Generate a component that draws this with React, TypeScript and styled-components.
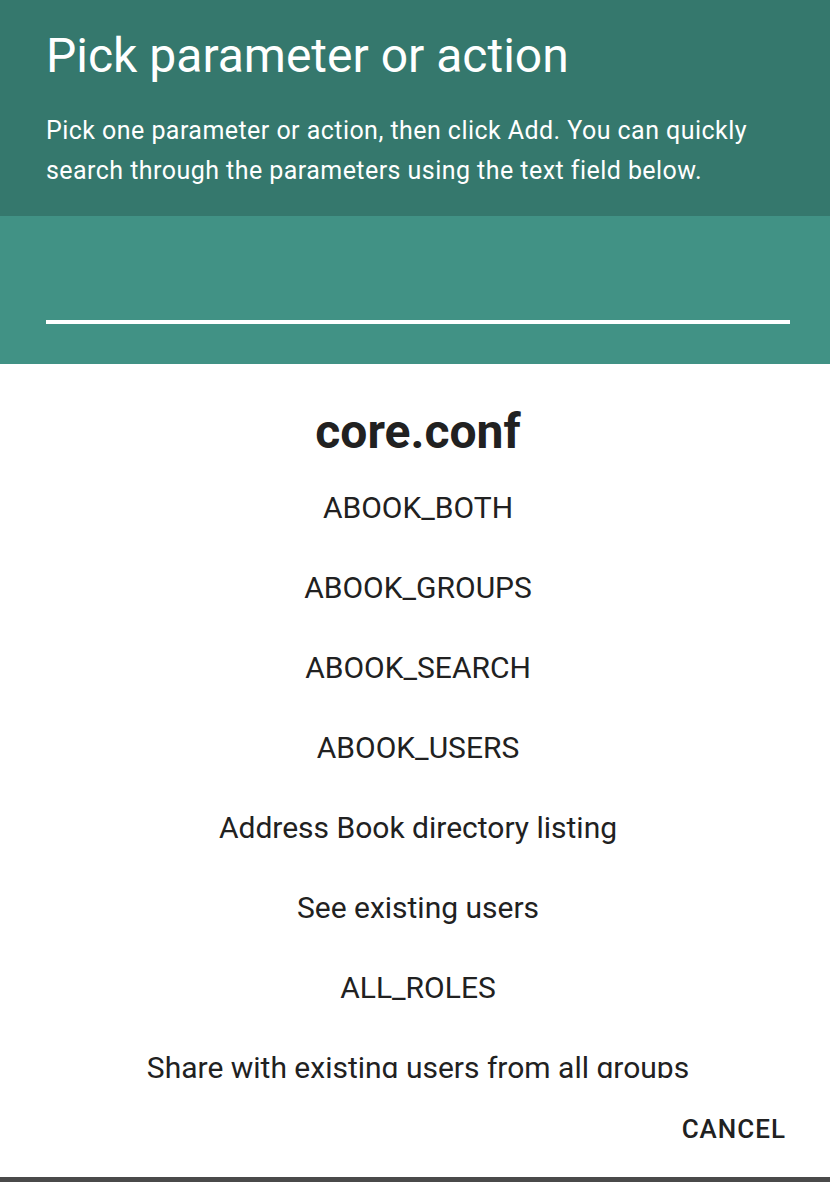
import React from "react";
import styled, { createGlobalStyle } from "styled-components";

const Global = createGlobalStyle`
  html, body { margin: 0; padding: 0; background: #4a4a4a; }
  body { font-family: Roboto, "Noto Sans", sans-serif; }
`;

const Dialog = styled.div`
  width: 830px;
  height: 1177px;
  background: #ffffff;
  display: flex;
  flex-direction: column;
  overflow: hidden;
`;

const Header = styled.header`
  background: #35786d;
  height: 216px;
  flex-shrink: 0;
  box-sizing: border-box;
  padding: 24px 46px 0 46px;
  color: #ffffff;
`;

const Title = styled.h1`
  margin: 0;
  font-size: 48px;
  font-weight: 400;
  line-height: 64px;
`;

const Subtitle = styled.p`
  margin: 23px 0 0 0;
  font-size: 25px;
  letter-spacing: 0.45px;
  line-height: 40px;
  font-weight: 400;
`;

const SearchArea = styled.div`
  background: #419285;
  height: 148px;
  flex-shrink: 0;
  box-sizing: border-box;
  padding: 0 40px 0 46px;
  display: flex;
  flex-direction: column;
  justify-content: flex-start;
`;

const SearchInput = styled.input`
  margin-top: 56px;
  height: 48px;
  background: transparent;
  border: none;
  border-bottom: 4px solid #ffffff;
  color: #ffffff;
  font-family: Roboto, sans-serif;
  font-size: 24px;
  outline: none;
  padding: 0;
`;

const Content = styled.div`
  flex: 1;
  overflow: hidden;
  display: flex;
  flex-direction: column;
  align-items: center;
  padding: 36px 0 0 6px;
`;

const Section = styled.h2`
  margin: 0 0 3px 0;
  font-size: 48px;
  font-weight: 700;
  color: #212121;
  line-height: 64px;
`;

const List = styled.ul`
  list-style: none;
  margin: 0;
  padding: 0;
  display: flex;
  flex-direction: column;
  align-items: center;
`;

const Item = styled.li`
  height: 80px;
  display: flex;
  align-items: center;
  font-size: 30px;
  color: #212121;
  white-space: nowrap;
`;

const Actions = styled.div`
  height: 99px;
  flex-shrink: 0;
  display: flex;
  justify-content: flex-end;
  align-items: center;
  padding-right: 44px;
`;

const Button = styled.button`
  background: none;
  border: none;
  font-family: Roboto, sans-serif;
  font-size: 26px;
  letter-spacing: 1px;
  font-weight: 500;
  color: #212121;
  padding: 0;
  text-transform: uppercase;
  margin-top: 2px;
`;

const items = [
  "ABOOK_BOTH",
  "ABOOK_GROUPS",
  "ABOOK_SEARCH",
  "ABOOK_USERS",
  "Address Book directory listing",
  "See existing users",
  "ALL_ROLES",
  "Share with existing users from all groups",
  "ALL_USERS",
];

export default function App() {
  return (
    <>
      <Global />
      <Dialog>
        <Header>
          <Title>Pick parameter or action</Title>
          <Subtitle>
            Pick one parameter or action, then click Add. You can quickly search through the parameters using the text field below.
          </Subtitle>
        </Header>
        <SearchArea>
          <SearchInput aria-label="Search" />
        </SearchArea>
        <Content>
          <Section>core.conf</Section>
          <List>
            {items.map((t) => (
              <Item key={t}>{t}</Item>
            ))}
          </List>
        </Content>
        <Actions>
          <Button>Cancel</Button>
        </Actions>
      </Dialog>
    </>
  );
}
